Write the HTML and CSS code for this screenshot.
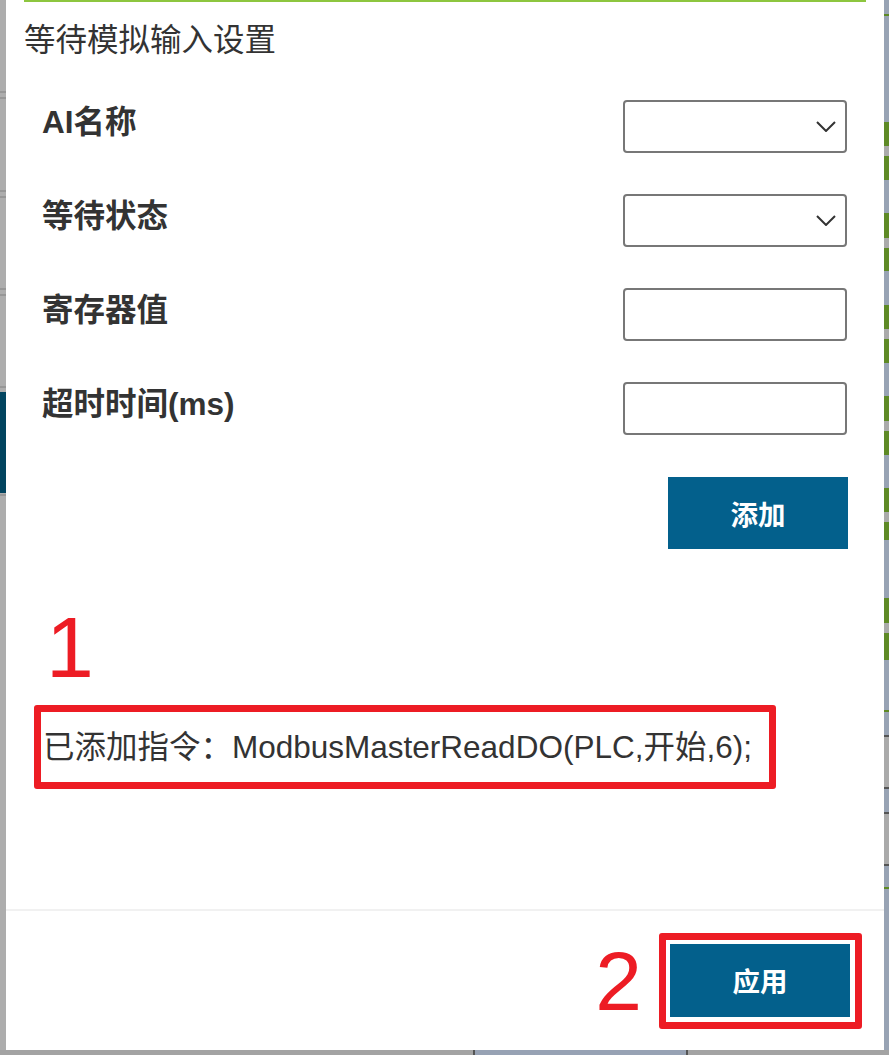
FILE: index.html
```html
<!DOCTYPE html>
<html lang="zh-CN">
<head>
<meta charset="utf-8">
<title>等待模拟输入设置</title>
<link rel="stylesheet" href="styles.css">
</head>
<body>
<div class="screen">
  <div class="main">
    <div class="strip-left"></div>
    <div class="modal">
      <div class="modal-header">
        <h1 class="modal-title">等待模拟输入设置</h1>
      </div>
      <div class="modal-body">
        <div class="form">
          <div class="row">
            <label class="label">AI名称</label>
            <div class="control select">
              <svg class="chev" width="20" height="11" viewBox="0 0 20 11"><polyline points="1,1 10,10 19,1" fill="none" stroke="#333" stroke-width="2"/></svg>
            </div>
          </div>
          <div class="row">
            <label class="label">等待状态</label>
            <div class="control select">
              <svg class="chev" width="20" height="11" viewBox="0 0 20 11"><polyline points="1,1 10,10 19,1" fill="none" stroke="#333" stroke-width="2"/></svg>
            </div>
          </div>
          <div class="row">
            <label class="label">寄存器值</label>
            <input class="control" type="text">
          </div>
          <div class="row">
            <label class="label">超时时间(ms)</label>
            <input class="control" type="text">
          </div>
        </div>
        <div class="add-row">
          <button class="btn">添加</button>
        </div>
        <div class="mark mark-1">1</div>
        <div class="cmd-box">已添加指令：ModbusMasterReadDO(PLC,开始,6);</div>
      </div>
      <div class="modal-footer">
        <div class="mark mark-2">2</div>
        <div class="hl-box">
          <button class="btn btn-apply">应用</button>
        </div>
      </div>
    </div>
    <div class="strip-right"></div>
  </div>
  <div class="bottom">
    <div class="bottom-gray"></div>
    <div class="bottom-tab"></div>
    <div class="bottom-rest"></div>
  </div>
</div>
</body>
</html>
```
FILE: styles.css
```css
html, body {
  margin: 0;
  padding: 0;
  background: #a8a8a8;
  overflow: hidden;
}
body {
  font-family: "Liberation Sans", "Noto Sans CJK SC", sans-serif;
  color: #333;
}
.screen {
  width: 889px;
  height: 1055px;
  display: flex;
  flex-direction: column;
}
.main {
  display: flex;
  height: 1050px;
}
.strip-left {
  width: 6px;
  flex: none;
  background: linear-gradient(to bottom,
    #adadad 0, #adadad 91px, #979797 91px, #979797 93px, #adadad 93px, #adadad 97px,
    #979797 97px, #979797 99px, #adadad 99px, #adadad 190px, #979797 190px, #979797 192px,
    #adadad 192px, #adadad 196px, #979797 196px, #979797 198px, #adadad 198px, #adadad 288px,
    #979797 288px, #979797 290px, #adadad 290px, #adadad 294px, #979797 294px, #979797 296px,
    #adadad 296px, #adadad 386px, #979797 386px, #979797 388px, #adadad 388px, #adadad 392px,
    #02445f 392px, #02445f 493px, #adadad 493px, #adadad 494px, #979797 494px, #979797 496px,
    #adadad 496px, #adadad 100%);
}
.strip-right {
  width: 5px;
  flex: none;
  background:
    linear-gradient(to bottom,
      #98a3b4 0, #98a3b4 14px, #5e8a26 14px, #5e8a26 16px, #98a3b4 16px, #98a3b4 122px,
      transparent 122px, transparent 540px, #98a3b4 540px, #98a3b4 598px,
      #5e8a26 598px, #5e8a26 623px, #aaaaaa 623px, #aaaaaa 633px, #5e8a26 633px, #5e8a26 660px,
      #98a3b4 660px, #98a3b4 710px, #5e8a26 710px, #5e8a26 712px, #98a3b4 712px, #98a3b4 735px,
      #555 735px, #555 737px, #aaaaaa 737px, #aaaaaa 787px, #555 787px, #555 789px,
      #98a3b4 789px, #98a3b4 812px, #555 812px, #555 814px, #aaaaaa 814px, #aaaaaa 864px,
      #555 864px, #555 866px, #98a3b4 866px, #98a3b4 887px, #5e8a26 887px, #5e8a26 889px,
      #98a3b4 889px, #98a3b4 100%),
    repeating-linear-gradient(to bottom,
      #5e8a26 0, #5e8a26 24px, #aaaaaa 24px, #aaaaaa 34px, #5e8a26 34px, #5e8a26 58px,
      #98a3b4 58px, #98a3b4 91.5px);
  background-position: 0 0, 0 122px;
  background-repeat: no-repeat, repeat-y;
}
.modal {
  width: 878px;
  flex: none;
  background: #fff;
  display: flex;
  flex-direction: column;
}
.modal-header {
  margin: 0 18px;
  border-top: 2px solid #8dc63f;
  padding-top: 16px;
}
.modal-title {
  margin: 0;
  font-size: 31.5px;
  line-height: 44px;
  font-weight: normal;
  color: #333;
}
.modal-body {
  flex: 1;
  padding: 38px 37px 0 36px;
}
.form {
  display: flex;
  flex-direction: column;
  gap: 41px;
}
.row {
  display: flex;
  align-items: flex-start;
  height: 53px;
}
.label {
  font-size: 31.5px;
  font-weight: bold;
  line-height: 44px;
  color: #333;
}
.control {
  margin-left: auto;
  width: 224px;
  height: 53px;
  box-sizing: border-box;
  border: 2px solid #777;
  border-radius: 4px;
  background: #fff;
  font: inherit;
  padding: 0 8px;
}
.select {
  display: flex;
  align-items: center;
  justify-content: flex-end;
  padding-right: 9px;
}
.add-row {
  display: flex;
  justify-content: flex-end;
  margin-top: 42px;
  margin-right: -1px;
}
.btn {
  width: 180px;
  height: 72px;
  border: none;
  border-radius: 0;
  background: #03608c;
  color: #fff;
  font-family: "Liberation Sans", "Noto Sans CJK SC", sans-serif;
  font-size: 27.5px;
  font-weight: bold;
  padding: 0;
}
.mark {
  color: #ed1c24;
  line-height: 1;
}
.mark-1 {
  font-size: 86px;
  margin-top: 55px;
  padding-left: 4px;
  height: 86px;
}
.cmd-box {
  margin-top: 15px;
  margin-left: -8px;
  width: 742px;
  height: 84px;
  box-sizing: border-box;
  border: 7px solid #ed1c24;
  border-radius: 3px;
  padding-left: 2px;
  font-size: 31.5px;
  line-height: 70px;
  color: #333;
  white-space: nowrap;
}
.modal-footer {
  height: 139px;
  border-top: 2px solid #f1f1f1;
  display: flex;
  align-items: center;
  justify-content: flex-end;
  gap: 17px;
  padding-right: 22px;
}
.mark-2 {
  font-size: 84px;
  height: 84px;
}
.hl-box {
  border: 7px solid #ed1c24;
  border-radius: 3px;
  padding: 4px 5px 5px 4px;
  display: flex;
}
.btn-apply {
  height: 73px;
}
.bottom {
  height: 5px;
  display: flex;
}
.bottom-gray {
  width: 473px;
  background: #a3a3a3;
}
.bottom-tab {
  width: 211px;
  background: #97a2b4;
  border-left: 2px solid #555;
  border-right: 2px solid #555;
}
.bottom-rest {
  flex: 1;
  background: #a3a3a3;
}
```
